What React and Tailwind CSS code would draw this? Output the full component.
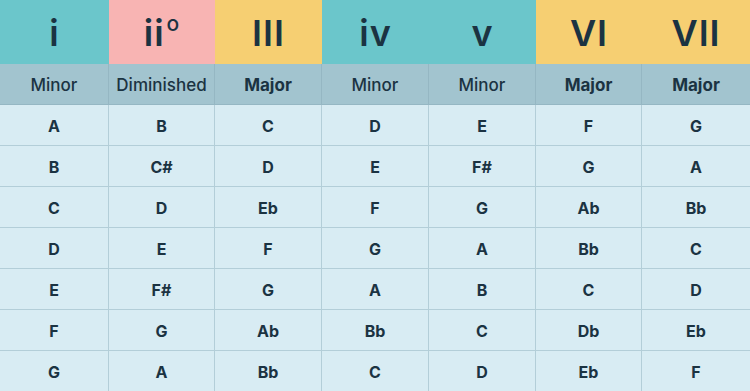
import React from "react";

const cols = "grid grid-cols-[109px_106px_107px_107px_107px_106px_1fr]";

const heads = [
  { n: "i", bg: "bg-[#6bc6cb]", q: "Minor", b: false },
  { n: "ii", sup: "o", bg: "bg-[#f8b4b3]", q: "Diminished", b: false },
  { n: "III", bg: "bg-[#f6cf72]", q: "Major", b: true },
  { n: "iv", bg: "bg-[#6bc6cb]", q: "Minor", b: false },
  { n: "v", bg: "bg-[#6bc6cb]", q: "Minor", b: false },
  { n: "VI", bg: "bg-[#f6cf72]", q: "Major", b: true },
  { n: "VII", bg: "bg-[#f6cf72]", q: "Major", b: true },
];

const rows = [
  ["A", "B", "C", "D", "E", "F", "G"],
  ["B", "C#", "D", "E", "F#", "G", "A"],
  ["C", "D", "Eb", "F", "G", "Ab", "Bb"],
  ["D", "E", "F", "G", "A", "Bb", "C"],
  ["E", "F#", "G", "A", "B", "C", "D"],
  ["F", "G", "Ab", "Bb", "C", "Db", "Eb"],
  ["G", "A", "Bb", "C", "D", "Eb", "F"],
];

export default function App() {
  return (
    <div className="w-[750px] h-[391px] overflow-hidden bg-[#d8ecf3] text-[#1b3342] font-['Inter','Liberation_Sans',sans-serif]">
      {/* numerals */}
      <div className={cols + " h-[64px]"}>
        {heads.map((h, i) => (
          <div
            key={i}
            className={`${h.bg} flex items-center justify-center pt-[2px] text-[36px] font-semibold tracking-[1px]`}
          >
            {h.n}
            {h.sup && (
              <span className="self-start mt-[11px] ml-[2px] text-[21px] font-medium leading-none">
                {h.sup}
              </span>
            )}
          </div>
        ))}
      </div>

      {/* chord quality */}
      <div className={cols + " h-[41px] bg-[#a2c4cf] border-b border-[#95b7c3]"}>
        {heads.map((h, i) => (
          <div
            key={i}
            className={`flex items-center justify-center pt-[3px] text-[17px] ${
              h.b ? "font-bold" : "font-medium"
            } ${i < 6 ? "border-r border-[#95b7c3]" : ""}`}
          >
            {h.q}
          </div>
        ))}
      </div>

      {rows.map((r, ri) => (
        <div key={ri} className={cols + " h-[41px] border-b border-[#b3ced8]"}>
          {r.map((c, ci) => (
            <div
              key={ci}
              className={`flex items-center justify-center pt-[2px] text-[16px] font-bold ${
                ci < 6 ? "border-r border-[#b3ced8]" : ""
              }`}
            >
              {c}
            </div>
          ))}
        </div>
      ))}
    </div>
  );
}
